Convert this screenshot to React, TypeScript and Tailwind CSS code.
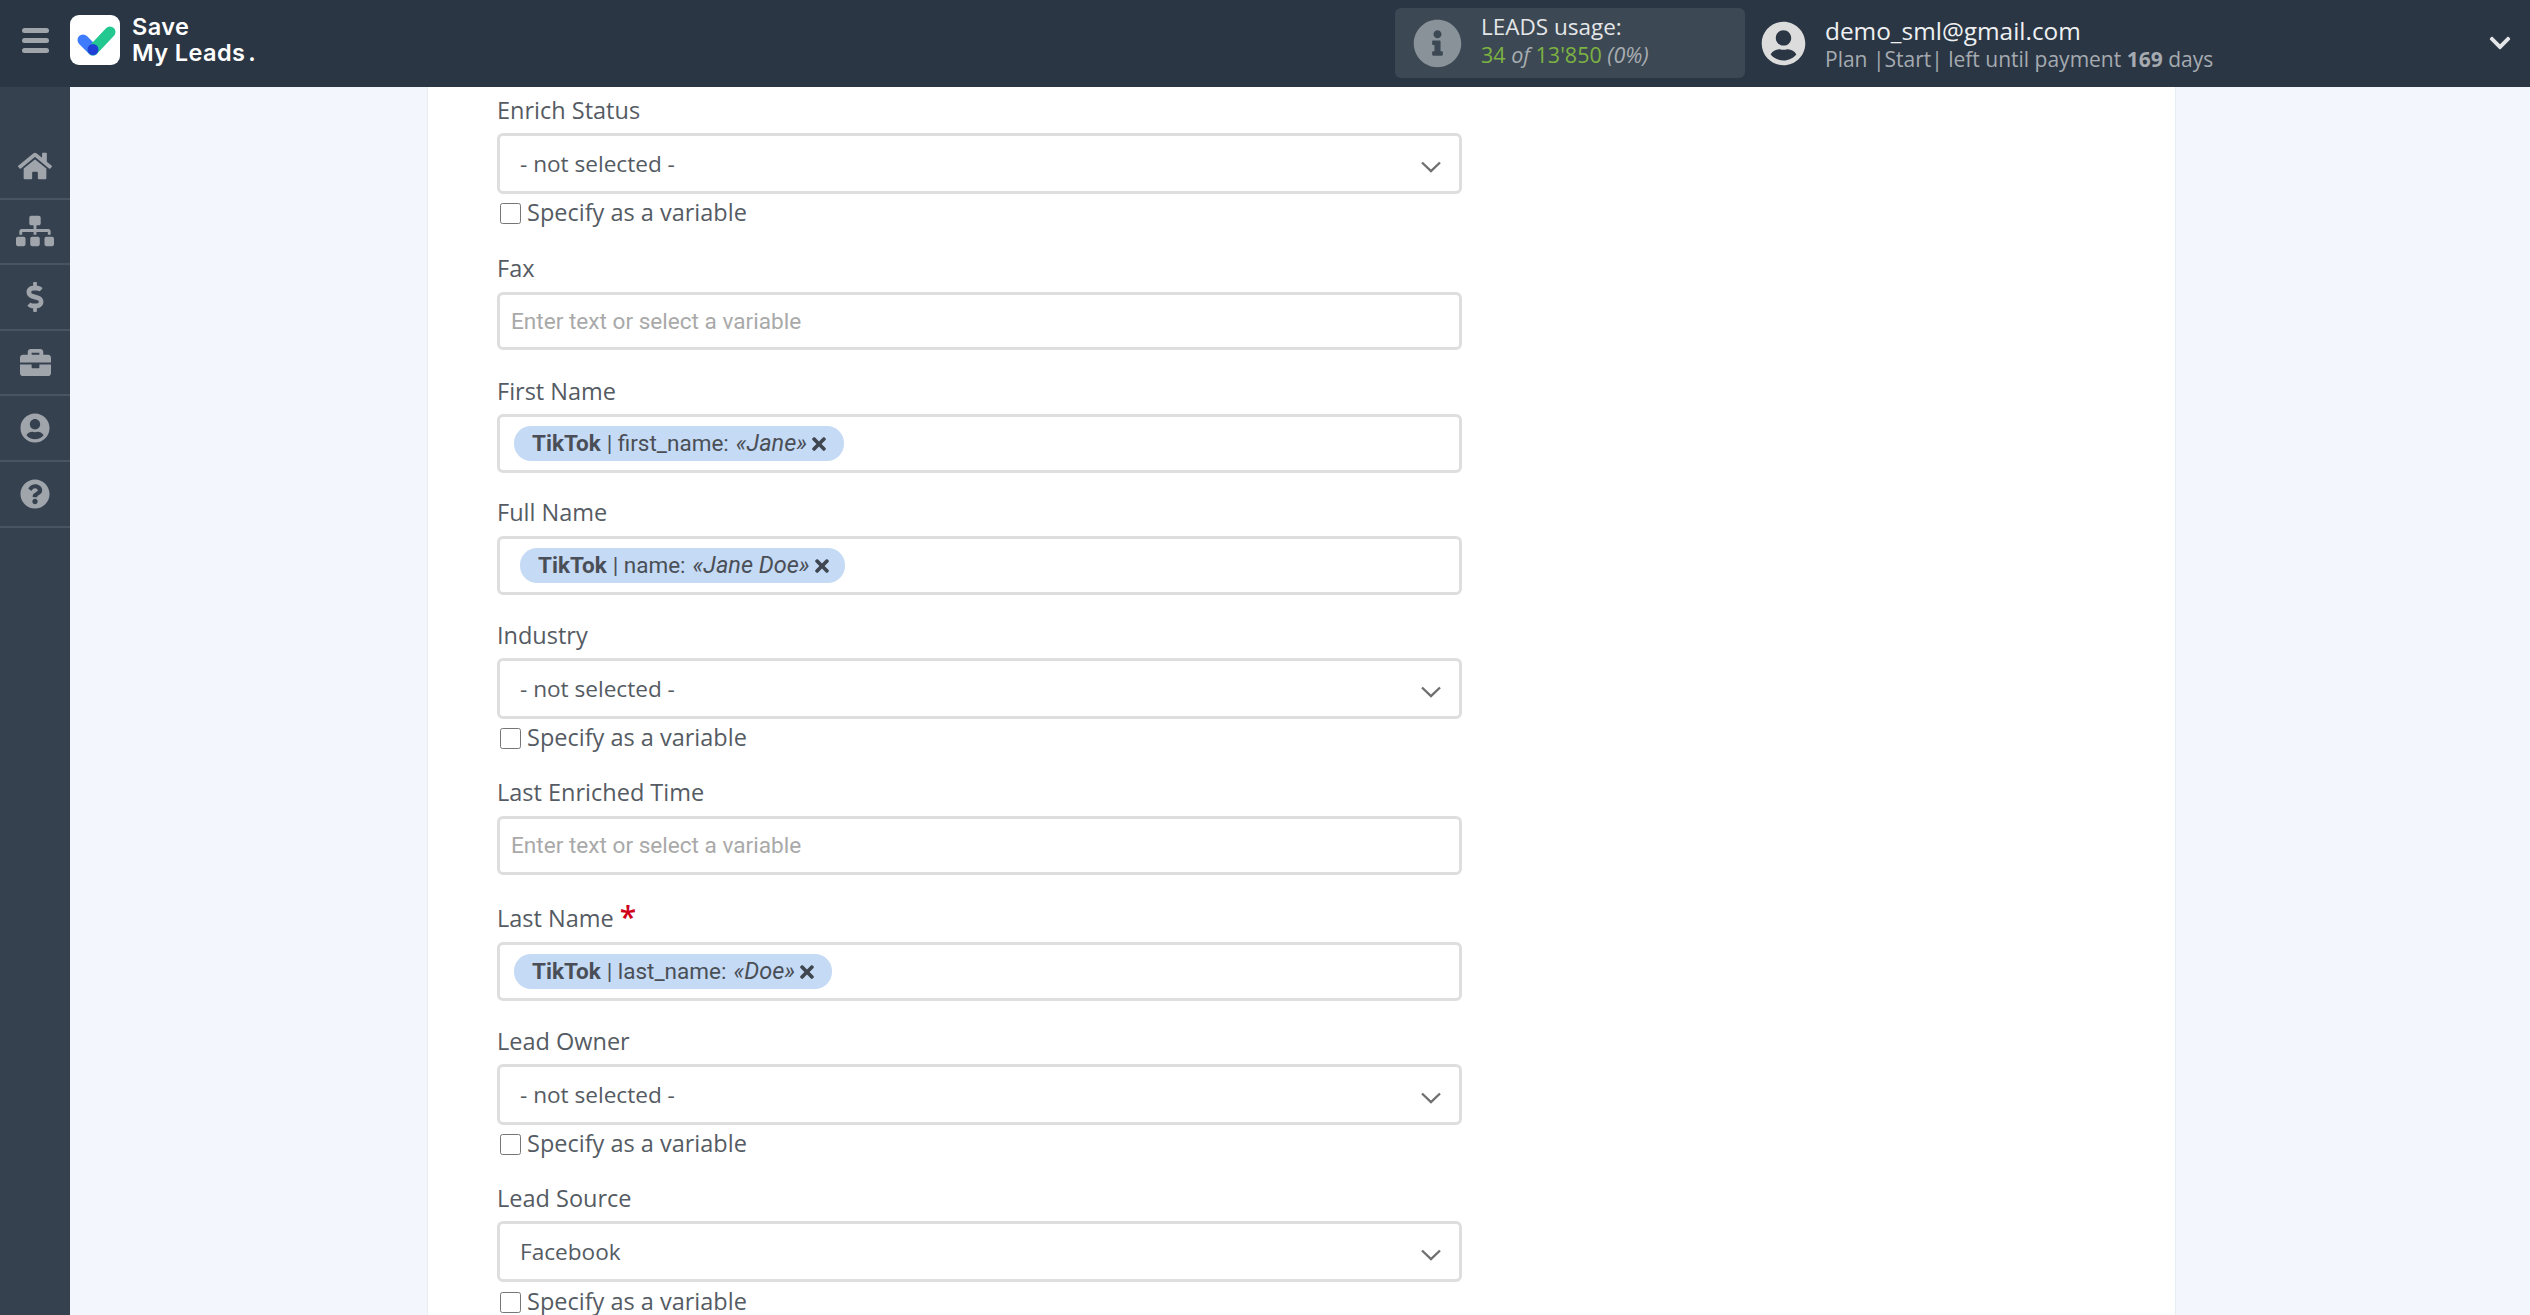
import React from "react";
import { FaHome, FaSitemap, FaDollarSign, FaBriefcase, FaUserCircle, FaQuestionCircle, FaInfoCircle, FaChevronDown, FaTimes } from "react-icons/fa";

const navIcons = [
  { I: FaHome, c: "w-[34px] h-[34px]" },
  { I: FaSitemap, c: "w-[38px] h-[38px]" },
  { I: FaDollarSign, c: "w-[30px] h-[30px]" },
  { I: FaBriefcase, c: "w-[31px] h-[31px]" },
  { I: FaUserCircle, c: "w-[30px] h-[30px]" },
  { I: FaQuestionCircle, c: "w-[30px] h-[30px]" },
];

function Label({ text, mt, required }: { text: string; mt: string; required?: boolean }) {
  return (
    <div className={`h-[30px] leading-[30px] text-[23.5px] font-medium text-[#555b63] whitespace-nowrap ${mt}`}>
      {text}
      {required && <span className="text-[#d0021b] ml-[6px] text-[30px] leading-[20px] font-semibold relative top-[1px]">*</span>}
    </div>
  );
}

function Chevron() {
  return (
    <svg viewBox="0 0 20 12" className="w-[20px] h-[12px]" fill="none" stroke="#707070" strokeWidth="2.4">
      <path d="M1 1.5 L10 10 L19 1.5" />
    </svg>
  );
}

function SelectField({ value, h }: { value: string; h: string }) {
  return (
    <div className={`w-[965px] ${h} border-[3px] border-[#dedede] rounded-[6px] bg-white flex items-center justify-between pl-[20px] pr-[18px]`}>
      <span className="text-[22.6px] text-[#555b63]">{value}</span>
      <span className="mt-[6px] flex"><Chevron /></span>
    </div>
  );
}

function Check({ mt }: { mt: string }) {
  return (
    <label className={`flex items-center h-[30px] ${mt}`}>
      <input type="checkbox" className="w-[21px] h-[21px] ml-[3px] mr-[6px] m-0" />
      <span className="text-[23.5px] font-medium text-[#555b63] whitespace-nowrap">Specify as a variable</span>
    </label>
  );
}

function TextInput({ h }: { h: string }) {
  return (
    <input
      placeholder="Enter text or select a variable"
      className={`block w-[965px] ${h} border-[3px] border-[#dedede] rounded-[6px] bg-white pl-[11px] text-[22.6px] font-['Roboto',sans-serif] outline-none placeholder:text-[#a9a9a9]`}
    />
  );
}

function ChipField({ source, field, value, w, pl }: { source: string; field: string; value: string; w: string; pl: string }) {
  return (
    <div className={`w-[965px] h-[59px] border-[3px] border-[#dedede] rounded-[6px] bg-white flex items-center ${pl}`}>
      <span className={`${w} h-[35px] rounded-[17px] bg-[#c5daf4] flex items-center pl-[18px] text-[22.5px] text-[#4a4f57] font-['Roboto',sans-serif] whitespace-nowrap`}>
        <b className="font-bold">{source}</b>
        <span className="ml-[6px]">| {field}:</span>
        <i className="ml-[7px] text-[23.5px]">{value}</i>
        <FaTimes className="w-[20px] h-[20px] ml-[2px] text-[#3f4650] shrink-0" />
      </span>
    </div>
  );
}

export default function App() {
  return (
    <div className="h-[1315px] w-[2530px] overflow-hidden flex flex-col font-['Open_Sans',sans-serif] bg-[#f3f6fc]">
      <header className="h-[87px] shrink-0 bg-[#2b3644] flex items-center">
        <div className="w-[70px] shrink-0 flex justify-center">
          <div className="w-[27px] flex flex-col gap-[5px] -mt-[6px]">
            <span className="h-[5px] rounded-full bg-[#a0a5ab]" />
            <span className="h-[5px] rounded-full bg-[#a0a5ab]" />
            <span className="h-[5px] rounded-full bg-[#a0a5ab]" />
          </div>
        </div>
        <div className="w-[50px] h-[50px] rounded-[9px] bg-white shrink-0 -mt-[7px] flex items-center justify-center">
          <svg viewBox="0 0 50 50" className="w-[50px] h-[50px]">
            <path d="M13 25 L23 35" stroke="#3f7bff" strokeWidth="11" strokeLinecap="round" fill="none" />
            <path d="M23 35 L40 17" stroke="#22c88f" strokeWidth="11" strokeLinecap="round" fill="none" />
            <circle cx="23" cy="34.5" r="5.5" fill="#1f3fd6" />
          </svg>
        </div>
        <div className="ml-[12px] w-[125px] shrink-0 -mt-[7px] text-white font-['Inter',sans-serif] font-semibold text-[23.5px] leading-[26px] tracking-[0.4px]">
          <div>Save</div>
          <div>My Leads<span className="ml-[3px]">.</span></div>
        </div>
        <div className="ml-[1138px] w-[350px] shrink-0 h-[70px] -mt-[1px] rounded-[6px] bg-[#3c4853] flex items-center pl-[18px]">
          <FaInfoCircle className="w-[49px] h-[49px] text-[#8a9299] shrink-0" />
          <div className="ml-[19px] -mt-[5px]">
            <div className="text-[22.5px] leading-[28px] text-[#e4e6e8]">LEADS usage:</div>
            <div className="text-[21.5px] leading-[28px] text-[#7cb342]">
              34 <i className="text-[#a8adb2]">of</i> 13'850 <i className="text-[#a8adb2]">(0%)</i>
            </div>
          </div>
        </div>
        <FaUserCircle className="ml-[16px] w-[45px] h-[45px] text-[#dcdcdc] shrink-0" />
        <div className="ml-[19px] w-[663px] shrink-0">
          <div className="text-[24.4px] leading-[30px] text-[#eef0f2]">demo_sml@gmail.com</div>
          <div className="text-[21px] leading-[26px] text-[#a5aab0]">
            Plan |Start| left until payment <b className="font-bold">169</b> days
          </div>
        </div>
        <FaChevronDown className="w-[24px] h-[24px] text-[#e4e6e8] shrink-0 -mt-[2px]" />
      </header>
      <div className="flex-1 flex min-h-0">
        <aside className="w-[70px] shrink-0 bg-[#364150] pt-[47px]">
          {navIcons.map(({ I, c }, i) => (
            <div key={i} className="h-[65.6px] border-b-[2px] border-[#4a5461] flex items-center justify-center">
              <I className={`${c} text-[#a0a5ab]`} />
            </div>
          ))}
        </aside>
        <main className="flex-1 min-w-0">
          <div className="ml-[357px] w-[1749px] h-full bg-white border-x-[1px] border-[#e8ecf3] pl-[69px] pt-[8px]">
            <Label text="Enrich Status" mt="mt-0" />
            <div className="mt-[8px]"><SelectField value="- not selected -" h="h-[61px]" /></div>
            <Check mt="mt-[4px]" />
            <Label text="Fax" mt="mt-[25px]" />
            <div className="mt-[9px]"><TextInput h="h-[58px]" /></div>
            <Label text="First Name" mt="mt-[26px]" />
            <div className="mt-[8px]"><ChipField source="TikTok" field="first_name" value="«Jane»" w="w-[330px]" pl="pl-[14px]" /></div>
            <Label text="Full Name" mt="mt-[24px]" />
            <div className="mt-[9px]"><ChipField source="TikTok" field="name" value="«Jane Doe»" w="w-[325px]" pl="pl-[20px]" /></div>
            <Label text="Industry" mt="mt-[25px]" />
            <div className="mt-[8px]"><SelectField value="- not selected -" h="h-[61px]" /></div>
            <Check mt="mt-[4px]" />
            <Label text="Last Enriched Time" mt="mt-[24px]" />
            <div className="mt-[9px]"><TextInput h="h-[59px]" /></div>
            <Label text="Last Name" mt="mt-[28px]" required />
            <div className="mt-[9px]"><ChipField source="TikTok" field="last_name" value="«Doe»" w="w-[318px]" pl="pl-[14px]" /></div>
            <Label text="Lead Owner" mt="mt-[25px]" />
            <div className="mt-[8px]"><SelectField value="- not selected -" h="h-[61px]" /></div>
            <Check mt="mt-[4px]" />
            <Label text="Lead Source" mt="mt-[24px]" />
            <div className="mt-[8px]"><SelectField value="Facebook" h="h-[61px]" /></div>
            <Check mt="mt-[5px]" />
          </div>
        </main>
      </div>
    </div>
  );
}
